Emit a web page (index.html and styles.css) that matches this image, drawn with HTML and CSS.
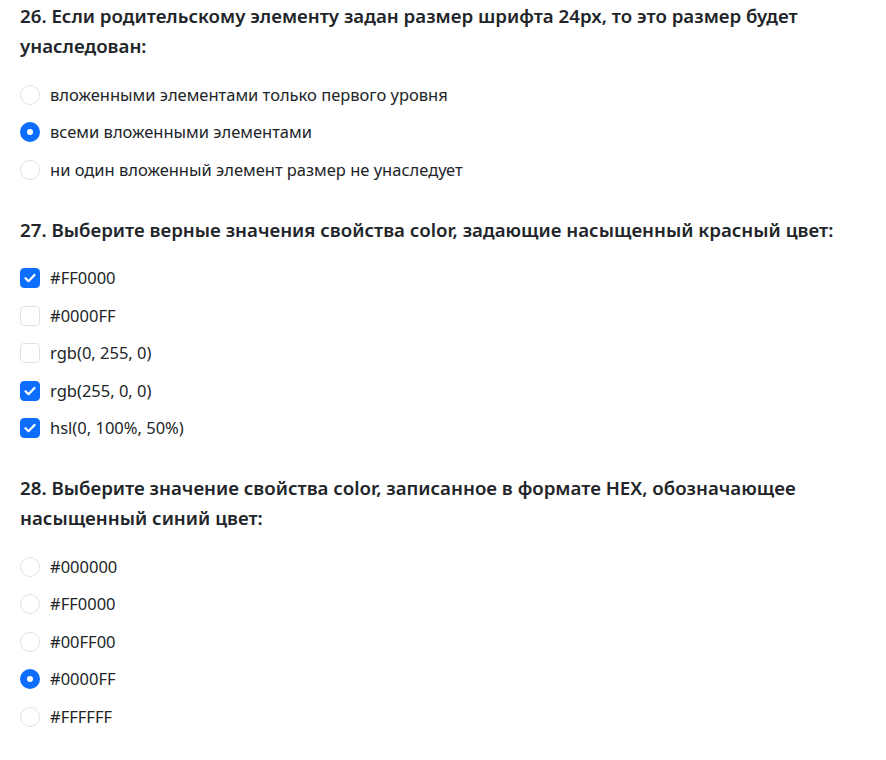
FILE: index.html
```html
<!DOCTYPE html>
<html lang="ru">
<head>
<meta charset="utf-8">
<link rel="stylesheet" href="styles.css">
</head>
<body>
<div class="quiz">
  <section class="question">
    <h2 class="q-title">26. Если родительскому элементу задан размер шрифта 24px, то это размер будет унаследован:</h2>
    <div class="options">
      <label class="opt"><span class="radio"></span><span class="text">вложенными элементами только первого уровня</span></label>
      <label class="opt"><span class="radio on"></span><span class="text">всеми вложенными элементами</span></label>
      <label class="opt"><span class="radio"></span><span class="text">ни один вложенный элемент размер не унаследует</span></label>
    </div>
  </section>
  <section class="question">
    <h2 class="q-title">27. Выберите верные значения свойства color, задающие насыщенный красный цвет:</h2>
    <div class="options">
      <label class="opt"><span class="check on"><svg viewBox="0 0 20 20"><path d="M5.5 10.2l3 3 6-6.2" fill="none" stroke="#fff" stroke-width="2.2" stroke-linecap="round" stroke-linejoin="round"/></svg></span><span class="text">#FF0000</span></label>
      <label class="opt"><span class="check"></span><span class="text">#0000FF</span></label>
      <label class="opt"><span class="check"></span><span class="text">rgb(0, 255, 0)</span></label>
      <label class="opt"><span class="check on"><svg viewBox="0 0 20 20"><path d="M5.5 10.2l3 3 6-6.2" fill="none" stroke="#fff" stroke-width="2.2" stroke-linecap="round" stroke-linejoin="round"/></svg></span><span class="text">rgb(255, 0, 0)</span></label>
      <label class="opt"><span class="check on"><svg viewBox="0 0 20 20"><path d="M5.5 10.2l3 3 6-6.2" fill="none" stroke="#fff" stroke-width="2.2" stroke-linecap="round" stroke-linejoin="round"/></svg></span><span class="text">hsl(0, 100%, 50%)</span></label>
    </div>
  </section>
  <section class="question">
    <h2 class="q-title">28. Выберите значение свойства color, записанное в формате HEX, обозначающее насыщенный синий цвет:</h2>
    <div class="options">
      <label class="opt"><span class="radio"></span><span class="text">#000000</span></label>
      <label class="opt"><span class="radio"></span><span class="text">#FF0000</span></label>
      <label class="opt"><span class="radio"></span><span class="text">#00FF00</span></label>
      <label class="opt"><span class="radio on"></span><span class="text">#0000FF</span></label>
      <label class="opt"><span class="radio"></span><span class="text">#FFFFFF</span></label>
    </div>
  </section>
</div>
</body>
</html>
```

FILE: styles.css
```css
html, body {
  margin: 0;
  padding: 0;
  background: #fff;
}
body {
  font-family: "Noto Sans", "Open Sans", sans-serif;
  color: #212529;
}
.quiz {
  padding: 1px 20px 0 20px;
  display: flex;
  flex-direction: column;
  gap: 26px;
}
.question {
  display: flex;
  flex-direction: column;
  gap: 15px;
}
.q-title {
  margin: 0;
  font-size: 18.7px;
  font-weight: 600;
  line-height: 30px;
}
.options {
  display: flex;
  flex-direction: column;
}
.opt {
  display: flex;
  align-items: center;
  height: 37.5px;
  gap: 10px;
}
.text {
  font-size: 16.5px;
  line-height: 24px;
  color: #212529;
}
.radio, .check {
  width: 20px;
  height: 20px;
  box-sizing: border-box;
  border: 1px solid #dee2e6;
  background: #fff;
  flex: none;
  display: flex;
  align-items: center;
  justify-content: center;
}
.radio {
  border-radius: 50%;
}
.radio.on {
  border: 7px solid #0d6efd;
  background: #fff;
}
.check {
  border-radius: 4px;
}
.check.on {
  background: #0d6efd;
  border-color: #0d6efd;
}
.check svg {
  width: 20px;
  height: 20px;
  flex: none;
}
```
